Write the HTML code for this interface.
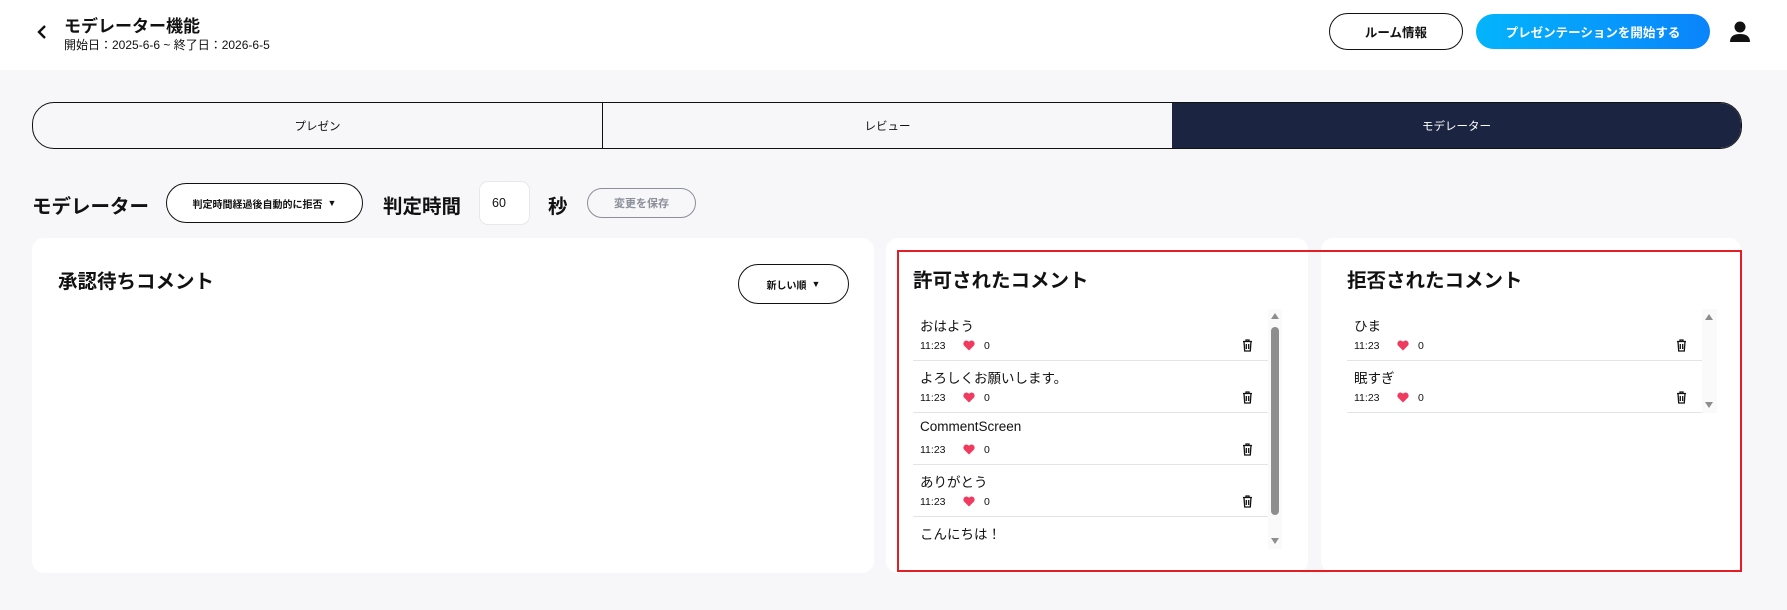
<!DOCTYPE html>
<html><head><meta charset="utf-8"><style>
*{box-sizing:border-box;margin:0;padding:0}
body{width:1787px;height:610px;background:#f7f7f9;font-family:"Liberation Sans","Noto Sans CJK JP",sans-serif;color:#111;position:relative;overflow:hidden}
.a{position:absolute}
.hdr{left:0;top:0;width:1787px;height:70px;background:#fff}
.btn{border:1.5px solid #111;border-radius:22px;display:flex;align-items:center;justify-content:center;font-weight:bold;background:#fff}
.card{background:#fff;border-radius:12px}
.h2{font-size:19.5px;font-weight:bold}
.item{position:absolute;left:0;width:355px;height:52px;border-bottom:1.5px solid #dfe5ee}
.item .t{position:absolute;left:7px;top:6px;font-size:13.5px}
.item .m{position:absolute;left:7px;top:31px;font-size:10.5px}
.item .hz{position:absolute;left:50px;top:31px}
.item .z{position:absolute;left:71px;top:31px;font-size:10.5px}
.item .tr{position:absolute;left:329px;top:30px}
</style></head><body>
<div class="a hdr"></div>
<svg class="a" style="left:36px;top:24px" width="12" height="16" viewBox="0 0 12 16"><path d="M9 2 L3 8 L9 14" fill="none" stroke="#111" stroke-width="2.4"/></svg>
<div class="a" style="left:64px;top:12px;font-size:17px;font-weight:bold">モデレーター機能</div>
<div class="a" style="left:64px;top:36px;font-size:12px">開始日：2025-6-6 ~ 終了日：2026-6-5</div>
<div class="a btn" style="left:1329px;top:13px;width:134px;height:37px;font-size:12.5px">ルーム情報</div>
<div class="a" style="left:1476px;top:14px;width:234px;height:35px;border-radius:18px;background:linear-gradient(90deg,#03b4fb,#0a84fb);color:#fff;font-weight:bold;font-size:12.5px;display:flex;align-items:center;justify-content:center">プレゼンテーションを開始する</div>
<svg class="a" style="left:1729px;top:20px" width="22" height="24" viewBox="0 0 22 24"><circle cx="11" cy="7" r="5.5" fill="#111"/><path d="M1 22 Q1 14 11 14 Q21 14 21 22 Z" fill="#111"/></svg>

<div class="a" style="left:32px;top:102px;width:1710px;height:47px;border:1.5px solid #111;border-radius:22px;overflow:hidden;display:flex;background:#f7f7f9">
<div style="width:570px;display:flex;align-items:center;justify-content:center;font-size:11.5px;border-right:1.5px solid #111">プレゼン</div>
<div style="width:569px;display:flex;align-items:center;justify-content:center;font-size:11.5px">レビュー</div>
<div style="flex:1;display:flex;align-items:center;justify-content:center;font-size:11.5px;background:#1b2541;color:#fff">モデレーター</div>
</div>

<div class="a h2" style="left:32px;top:190px">モデレーター</div>
<div class="a btn" style="left:166px;top:183px;width:197px;height:40px;font-size:10px">判定時間経過後自動的に拒否 <span style="font-size:9px;margin-left:5px">▼</span></div>
<div class="a h2" style="left:383px;top:190px">判定時間</div>
<div class="a" style="left:479px;top:181px;width:51px;height:44px;background:#fff;border:1px solid #e6e8ee;border-radius:9px;font-size:12.5px;padding:14px 0 0 12px">60</div>
<div class="a h2" style="left:548px;top:190px">秒</div>
<div class="a" style="left:587px;top:188px;width:109px;height:30px;border:1.5px solid #8a8f99;border-radius:16px;color:#8a8f99;font-size:11px;font-weight:bold;display:flex;align-items:center;justify-content:center">変更を保存</div>

<div class="a card" style="left:32px;top:238px;width:842px;height:335px"></div>
<div class="a h2" style="left:58px;top:265px">承認待ちコメント</div>
<div class="a btn" style="left:738px;top:264px;width:111px;height:40px;font-size:10px">新しい順 <span style="font-size:9px;margin-left:5px">▼</span></div>

<div class="a card" style="left:886px;top:238px;width:422px;height:335px"></div>
<div class="a card" style="left:1321px;top:238px;width:420px;height:335px"></div>
<div class="a" style="left:897px;top:250px;width:845px;height:322px;border:2.5px solid #e31e24"></div>

<div class="a h2" style="left:913px;top:264px">許可されたコメント</div>
<div class="a h2" style="left:1347px;top:264px">拒否されたコメント</div>

<div class="a" style="left:913px;top:309px;width:355px;height:240px;overflow:hidden">
<div class="item" style="top:0"><div class="t">おはよう</div><div class="m">11:23</div><svg class="hz" width="12" height="11" viewBox="0 0 12 11"><path d="M6 10.5 L1 5.5 A3 3 0 0 1 6 1.8 A3 3 0 0 1 11 5.5 Z" fill="#f03a5f"/></svg><div class="z">0</div><svg class="tr" width="11" height="13" viewBox="0 0 11 13"><path d="M1 2.5h9M4 2.5V1h3v1.5M2 2.5l.7 9.5h5.6l.7-9.5M4.3 5v5M6.7 5v5" fill="none" stroke="#111" stroke-width="1.3"/></svg></div>
<div class="item" style="top:52px"><div class="t">よろしくお願いします。</div><div class="m">11:23</div><svg class="hz" width="12" height="11" viewBox="0 0 12 11"><path d="M6 10.5 L1 5.5 A3 3 0 0 1 6 1.8 A3 3 0 0 1 11 5.5 Z" fill="#f03a5f"/></svg><div class="z">0</div><svg class="tr" width="11" height="13" viewBox="0 0 11 13"><path d="M1 2.5h9M4 2.5V1h3v1.5M2 2.5l.7 9.5h5.6l.7-9.5M4.3 5v5M6.7 5v5" fill="none" stroke="#111" stroke-width="1.3"/></svg></div>
<div class="item" style="top:104px"><div class="t">CommentScreen</div><div class="m">11:23</div><svg class="hz" width="12" height="11" viewBox="0 0 12 11"><path d="M6 10.5 L1 5.5 A3 3 0 0 1 6 1.8 A3 3 0 0 1 11 5.5 Z" fill="#f03a5f"/></svg><div class="z">0</div><svg class="tr" width="11" height="13" viewBox="0 0 11 13"><path d="M1 2.5h9M4 2.5V1h3v1.5M2 2.5l.7 9.5h5.6l.7-9.5M4.3 5v5M6.7 5v5" fill="none" stroke="#111" stroke-width="1.3"/></svg></div>
<div class="item" style="top:156px"><div class="t">ありがとう</div><div class="m">11:23</div><svg class="hz" width="12" height="11" viewBox="0 0 12 11"><path d="M6 10.5 L1 5.5 A3 3 0 0 1 6 1.8 A3 3 0 0 1 11 5.5 Z" fill="#f03a5f"/></svg><div class="z">0</div><svg class="tr" width="11" height="13" viewBox="0 0 11 13"><path d="M1 2.5h9M4 2.5V1h3v1.5M2 2.5l.7 9.5h5.6l.7-9.5M4.3 5v5M6.7 5v5" fill="none" stroke="#111" stroke-width="1.3"/></svg></div>
<div class="item" style="top:208px;border:none"><div class="t">こんにちは！</div></div>
</div>
<div class="a" style="left:1268px;top:309px;width:14px;height:240px;background:#fafafa"></div>
<svg class="a" style="left:1270px;top:312px" width="10" height="8"><path d="M5 1 L9 7 H1Z" fill="#8e8e8e"/></svg>
<div class="a" style="left:1271px;top:327px;width:8px;height:188px;border-radius:4px;background:#8e8e8e"></div>
<svg class="a" style="left:1270px;top:537px" width="10" height="8"><path d="M1 1 H9 L5 7Z" fill="#8e8e8e"/></svg>

<div class="a" style="left:1347px;top:309px;width:355px;height:104px">
<div class="item" style="top:0"><div class="t">ひま</div><div class="m">11:23</div><svg class="hz" width="12" height="11" viewBox="0 0 12 11"><path d="M6 10.5 L1 5.5 A3 3 0 0 1 6 1.8 A3 3 0 0 1 11 5.5 Z" fill="#f03a5f"/></svg><div class="z">0</div><svg class="tr" width="11" height="13" viewBox="0 0 11 13"><path d="M1 2.5h9M4 2.5V1h3v1.5M2 2.5l.7 9.5h5.6l.7-9.5M4.3 5v5M6.7 5v5" fill="none" stroke="#111" stroke-width="1.3"/></svg></div>
<div class="item" style="top:52px"><div class="t">眠すぎ</div><div class="m">11:23</div><svg class="hz" width="12" height="11" viewBox="0 0 12 11"><path d="M6 10.5 L1 5.5 A3 3 0 0 1 6 1.8 A3 3 0 0 1 11 5.5 Z" fill="#f03a5f"/></svg><div class="z">0</div><svg class="tr" width="11" height="13" viewBox="0 0 11 13"><path d="M1 2.5h9M4 2.5V1h3v1.5M2 2.5l.7 9.5h5.6l.7-9.5M4.3 5v5M6.7 5v5" fill="none" stroke="#111" stroke-width="1.3"/></svg></div>
</div>
<div class="a" style="left:1702px;top:309px;width:15px;height:104px;background:#fafafa"></div>
<svg class="a" style="left:1704px;top:313px" width="10" height="8"><path d="M5 1 L9 7 H1Z" fill="#8e8e8e"/></svg>
<svg class="a" style="left:1704px;top:401px" width="10" height="8"><path d="M1 1 H9 L5 7Z" fill="#8e8e8e"/></svg>
</body></html>
